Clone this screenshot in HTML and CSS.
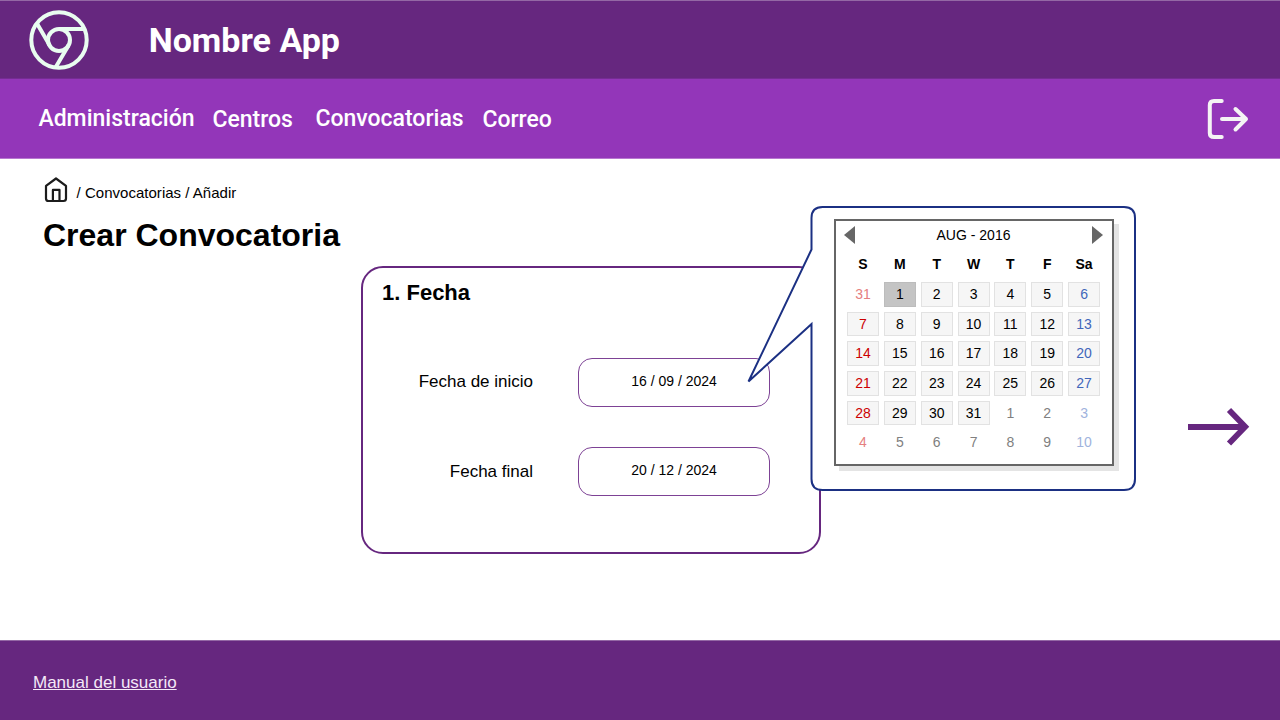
FILE: index.html
```html
<!DOCTYPE html>
<html lang="es">
<head>
<meta charset="utf-8">
<title>Crear Convocatoria</title>
<link rel="stylesheet" href="styles.css">
</head>
<body>
<header class="header">
  <svg class="logo" width="60" height="60" viewBox="0 0 60 60" fill="none" stroke="#e9fdf0" stroke-width="4">
    <circle cx="30" cy="30" r="27.7"/>
    <circle cx="30" cy="30" r="11"/>
    <path d="M30 19H54M8 13.500L20.500 35M39.500 35.500L26.800 57"/>
  </svg>
  <span class="brand">Nombre App</span>
</header>
<nav class="nav">
  <a class="nav-link nav-admin">Administración</a>
  <a class="nav-link nav-centros">Centros</a>
  <a class="nav-link nav-conv">Convocatorias</a>
  <a class="nav-link nav-correo">Correo</a>
  <svg class="logout" width="44" height="44" viewBox="0 0 44 44" fill="none" stroke="#f4f4f4" stroke-width="4" stroke-linecap="round" stroke-linejoin="round">
    <path d="M15.700 4H8Q3.800 4 3.800 8V36Q3.800 40 8 40H15.700M16 22H40M29.500 12L40 22L29.500 32.500"/>
  </svg>
</nav>
<main class="main">
  <div class="breadcrumb">
    <svg class="home" width="26" height="28" viewBox="0 0 26 28" fill="none" stroke="#1c1c1c" stroke-width="2.200" stroke-linejoin="round">
      <path d="M3 9.800L13 2.500L23 9.800V22.500Q23 25 20.500 25H5.500Q3 25 3 22.500ZM9.900 25V13.900H16.500V25"/>
    </svg>
    <span class="crumbs">/ Convocatorias / Añadir</span>
  </div>
  <h1 class="title">Crear Convocatoria</h1>
  <div class="step">
    <section class="card">
      <h2 class="card-title">1. Fecha</h2>
      <div class="field"><span class="label">Fecha de inicio</span><span class="input">16 / 09 / 2024</span></div>
      <div class="field"><span class="label label-end">Fecha final</span><span class="input">20 / 12 / 2024</span></div>
    </section>
    <svg class="next" width="64" height="42" viewBox="0 0 64 42" fill="none" stroke="#66277f" stroke-width="5.800">
      <path d="M1 21H58M42 4L58.200 20.800L42 37.600"/>
    </svg>
  </div>
  <div class="popover">
    <svg class="bubble" width="392" height="288" viewBox="0 0 392 288" fill="#fff" stroke="#1b3083" stroke-width="2">
      <path d="M77.500 3H379Q390 3 390 14V275Q390 286 379 286H77.500Q66.500 286 66.500 275V120L3.500 177.500L66.500 45.500V14Q66.500 3 77.500 3Z"/>
    </svg>
    <div class="calendar">
      <div class="cal-head">
        <svg width="12" height="18" viewBox="0 0 12 18"><path fill="#666" d="M0 9L11 0V18Z"/></svg>
        <span>AUG - 2016</span>
        <svg width="12" height="18" viewBox="0 0 12 18"><path fill="#666" d="M11 9L0 0V18Z"/></svg>
      </div>
      <div class="week names"><b>S</b><b>M</b><b>T</b><b>W</b><b>T</b><b>F</b><b>Sa</b></div>
      <div class="days">
        <span class="day sun out">31</span><span class="day today">1</span><span class="day">2</span><span class="day">3</span><span class="day">4</span><span class="day">5</span><span class="day sat">6</span>
        <span class="day sun">7</span><span class="day">8</span><span class="day">9</span><span class="day">10</span><span class="day">11</span><span class="day">12</span><span class="day sat">13</span>
        <span class="day sun">14</span><span class="day">15</span><span class="day">16</span><span class="day">17</span><span class="day">18</span><span class="day">19</span><span class="day sat">20</span>
        <span class="day sun">21</span><span class="day">22</span><span class="day">23</span><span class="day">24</span><span class="day">25</span><span class="day">26</span><span class="day sat">27</span>
        <span class="day sun">28</span><span class="day">29</span><span class="day">30</span><span class="day">31</span><span class="day out">1</span><span class="day out">2</span><span class="day sat out">3</span>
        <span class="day sun out">4</span><span class="day out">5</span><span class="day out">6</span><span class="day out">7</span><span class="day out">8</span><span class="day out">9</span><span class="day sat out">10</span>
      </div>
    </div>
  </div>
</main>
<footer class="footer"><a class="manual">Manual del usuario</a></footer>
</body>
</html>
```
FILE: styles.css
```css
* { box-sizing: border-box; }
body {
  margin: 0;
  width: 1280px;
  height: 720px;
  display: flex;
  flex-direction: column;
  overflow: hidden;
  background: #fff;
  color: #000;
  font-family: "Liberation Sans", Arial, sans-serif;
}
svg { display: block; flex: none; }
.header {
  height: 79px;
  flex: none;
  display: flex;
  align-items: flex-start;
  padding: 9px 29px 0;
  background: #66277f;
  border-top: 1px solid #9468a5;
  border-bottom: 1px solid #752c93;
}
.brand {
  margin: 10px 0 0 59.700px;
  font: 700 34px/40px Roboto, sans-serif;
  color: #fff;
  white-space: nowrap;
}
.nav {
  height: 80px;
  flex: none;
  display: flex;
  align-items: flex-start;
  padding: 18px 30px 0 38.400px;
  background: #9336b9;
  border-bottom: 1px solid #b778d0;
}
.nav-link {
  margin-top: 8px;
  font: 500 23px/28px Roboto, sans-serif;
  color: #fff;
  white-space: nowrap;
}
.nav-admin { width: 174px; }
.nav-centros { width: 103px; margin-top: 9px; }
.nav-conv { width: 167px; }
.nav-correo { margin-top: 9px; }
.logout { margin-left: auto; }
.main {
  position: relative;
  height: 481px;
  flex: none;
  padding: 17px 29px 0 43px;
}
.breadcrumb { display: flex; height: 28px; }
.crumbs { margin: 8px 0 0 7.600px; font-size: 15px; line-height: 18px; letter-spacing: 0.020px; white-space: nowrap; }
.title { margin: 12px 0 0; font-size: 32px; line-height: 38px; }
.step { display: flex; justify-content: space-between; margin: 12px 0 0 318px; }
.card {
  width: 460px;
  height: 288px;
  padding: 12px 49px 0 19px;
  border: 2px solid #66277f;
  border-radius: 22px;
}
.card-title { margin: 0 0 52px; font-size: 22px; line-height: 26px; }
.field { display: flex; align-items: center; justify-content: flex-end; height: 49px; margin-bottom: 40px; }
.label { margin: -2px 45px 0 0; font-size: 17px; }
.label-end { margin-top: 0; }
.input {
  width: 192px;
  height: 49px;
  border: 1px solid #7d4295;
  border-radius: 14px;
  text-align: center;
  font-size: 14px;
  line-height: 45px;
}
.next { margin-top: 140px; }
.popover { position: absolute; left: 745px; top: 45px; width: 392px; height: 288px; }
.bubble { position: absolute; left: 0; top: 0; }
.calendar {
  position: relative;
  width: 280px;
  height: 247px;
  margin: 15px 0 0 89px;
  border: 2px solid #666;
  background: #fff;
  box-shadow: 5px 5px 0 #e4e4e4;
  font-size: 14px;
}
.cal-head { display: flex; align-items: center; justify-content: space-between; height: 18px; margin: 5px 8px 0; }
.cal-head span { margin-left: -1px; }
.week, .days { display: grid; grid-template-columns: repeat(7, 32px); column-gap: 4.850px; margin-left: 11px; text-align: center; }
.names { margin-top: 12px; line-height: 17px; }
.days { margin-top: 9px; grid-auto-rows: 24.700px; row-gap: 4.950px; }
.day { border: 1px solid #e2e2e2; background: #f6f6f6; line-height: 23px; }
.today { background: #c4c4c4; border-color: #bcbcbc; }
.sun { color: #cc0000; }
.sat { color: #4166ba; }
.out { background: none; border-color: transparent; color: #808080; }
.sun.out { color: #e58080; }
.sat.out { color: #a0b3dd; }
.footer {
  height: 80px;
  flex: none;
  padding: 32px 0 0 33px;
  background: #66277f;
  border-top: 1px solid #9468a5;
}
.manual { font-size: 17px; line-height: 20px; color: #f4e9f8; text-decoration: underline; }
```
